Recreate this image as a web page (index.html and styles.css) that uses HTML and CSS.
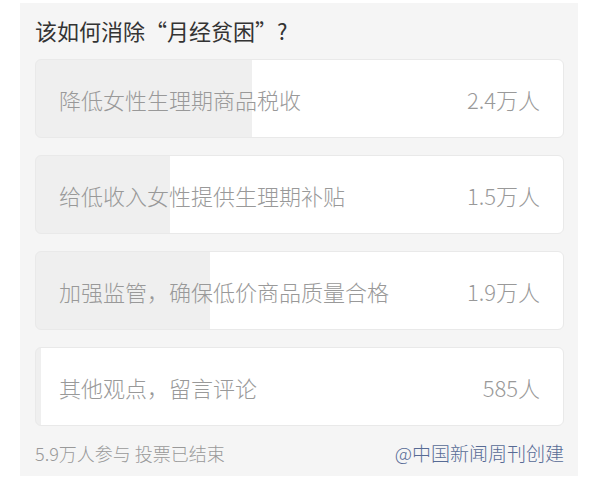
FILE: index.html
```html
<!DOCTYPE html>
<html lang="zh-CN">

<head>
    <meta charset="UTF-8">
    <meta name="viewport" content="width=device-width, initial-scale=1.0">
    <title>投票</title>
    <link rel="stylesheet" href="styles.css">
</head>

<body>

    <div class="vote">
        <div class="vote-title">该如何消除“月经贫困”?</div>

        <div class="options">
            <div class="option" style="--p: 41%">
                <span class="option-text">降低女性生理期商品税收</span>
                <span class="option-count">2.4万人</span>
            </div>
            <div class="option" style="--p: 25.5%">
                <span class="option-text">给低收入女性提供生理期补贴</span>
                <span class="option-count">1.5万人</span>
            </div>
            <div class="option" style="--p: 33%">
                <span class="option-text">加强监管，确保低价商品质量合格</span>
                <span class="option-count">1.9万人</span>
            </div>
            <div class="option" style="--p: 1%">
                <span class="option-text">其他观点，留言评论</span>
                <span class="option-count">585人</span>
            </div>
        </div>

        <div class="vote-footer">
            <span class="vote-info">5.9万人参与 投票已结束</span>
            <span class="vote-author">@中国新闻周刊创建</span>
        </div>
    </div>

</body>

</html>
```

FILE: styles.css
```css
body {
    font-family: "Noto Sans CJK SC", "Noto Sans", sans-serif;
    font-weight: 300;
    margin: 0;
    padding: 0;
    background-color: #fff;
}

.vote {
    width: 529px;
    margin: 3px 0 0 20px;
    padding: 0 14px 8px 15px;
    background-color: #f5f5f5;
}

.vote-title {
    padding-top: 12px;
    margin-bottom: 14px;
    font-size: 22px;
    font-weight: 400;
    line-height: 30px;
    color: #333;
}

.options {
    display: flex;
    flex-direction: column;
    gap: 17px;
}

.option {
    display: flex;
    align-items: center;
    justify-content: space-between;
    box-sizing: border-box;
    height: 79px;
    padding: 0 23px 0 23px;
    border: 1px solid #e9e9e9;
    border-radius: 6px;
    background: linear-gradient(to right, #efefef var(--p), #fff var(--p));
    font-size: 22px;
    color: #999;
}

.vote-footer {
    display: flex;
    justify-content: space-between;
    align-items: center;
    padding-top: 12px;
    line-height: 30px;
}

.vote-info {
    font-size: 18px;
    color: #999;
}

.vote-author {
    font-size: 19px;
    color: #576b95;
}
```
